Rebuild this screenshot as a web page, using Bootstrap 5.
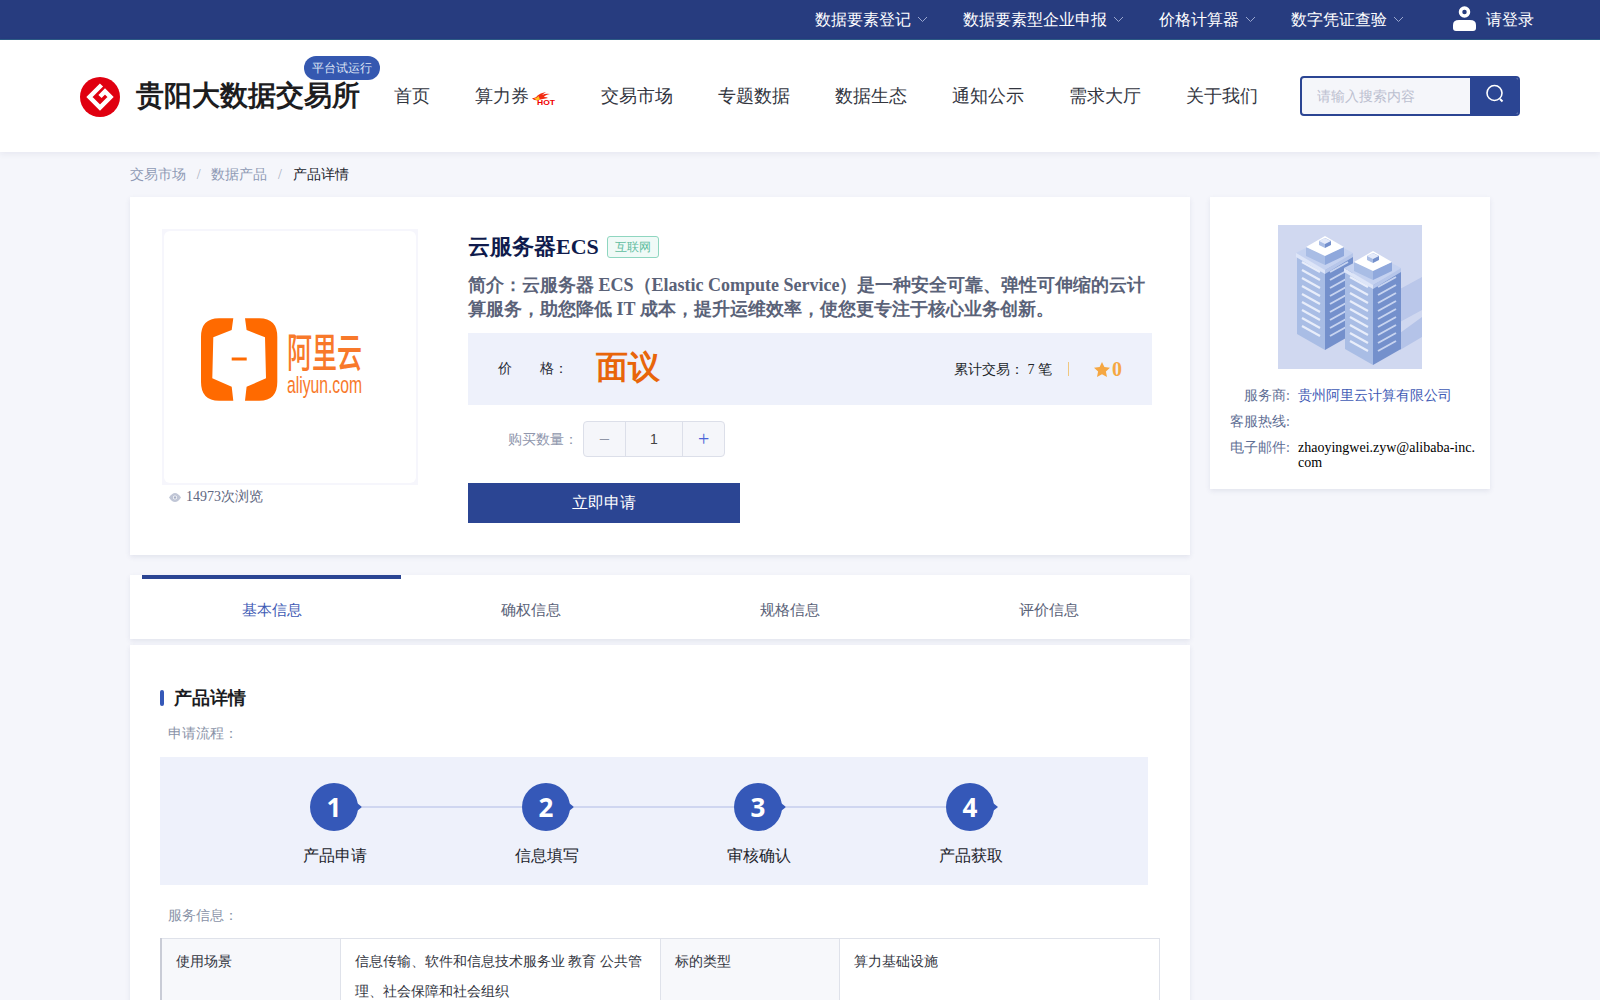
<!DOCTYPE html>
<html>
<head>
<meta charset="utf-8">
<title>云服务器ECS</title>
<link href="https://cdn.jsdelivr.net/npm/bootstrap@5.3.0/dist/css/bootstrap.min.css" rel="stylesheet">
<style>
html,body{height:1000px;overflow:hidden}
body{background:#f5f6fb;font-family:"Liberation Serif",serif;color:#212529}
.topstrip{height:40px;background:#273c7f;border-bottom:1px solid #2c5b86;color:#fff;font-size:16px;padding-right:66px;gap:35px}
.chev{width:11px;height:7px;margin-left:6px;stroke:#9aa7cf;fill:none}
.loginbox{margin-left:14px;gap:10px}
.loginbox svg{margin-top:-2px}
.topsite{height:112px;background:#fff;box-shadow:0 2px 6px rgba(60,70,120,.08);padding-left:80px;position:relative}
.sitelogo{margin-top:2px}
.brandname{font-size:28px;font-weight:600;color:#1d1d1f;margin-left:16px;line-height:40px;white-space:nowrap}
.trialtag{position:absolute;left:304px;top:16px;width:76px;height:24px;border-radius:12px;background:#3558b0;color:#dfe5f5;font-size:12px;line-height:24px;text-align:center}
.mainnav{margin-left:34px;gap:45px;font-size:18px;color:#33363f;white-space:nowrap}
.searchbox{margin-left:42px;width:220px;height:40px;border:2px solid #2b4593;border-radius:4px;overflow:hidden;background:#f5f6fa}
.searchbox input{flex:1;min-width:0;border:0;background:transparent;padding:0 15px;font-size:14px;outline:0}
.searchbox input::placeholder{color:#bcc0d0}
.searchbtn{width:48px;background:#2b4593}
.searchbtn svg{margin:-5px 0 0 2px}
.crumbs{margin:0 0 0 130px;height:45px;font-size:14px;--bs-breadcrumb-margin-bottom:0;--bs-breadcrumb-item-padding-x:10.7px;--bs-breadcrumb-divider-color:#a9aec0;align-items:center}
.crumbs .breadcrumb-item{color:#8f9ab5}
.crumbs .breadcrumb-item.active{color:#22242c}
.pagecols{margin-left:130px;width:1360px;gap:20px}
.leftcol{width:1060px}
.rightcol{width:280px}
.panel{background:#fff;box-shadow:0 2px 5px rgba(60,70,120,.1)}
.hero{height:358px;padding:32px;gap:50px}
.picbox{width:256px;height:256px;padding:2px;background:#f6f6fc}
.picinner{width:252px;height:252px;background:#fff;border-radius:6px}
.viewcount{font-size:14px;color:#5f6882;margin-top:2px;padding-left:7px;gap:5px;line-height:20px}
.herotitle{font-size:22px;font-weight:700;color:#0f1b4c;line-height:30px;margin-top:3px;gap:8px}
.herotag{width:52px;height:22px;border:1px solid #8fd6c0;border-radius:3px;background:#f0faf7;color:#5fbd9f;font-size:12px;font-weight:400;line-height:20px;text-align:center}
.herodesc{font-size:18px;font-weight:700;line-height:24px;color:#5a6278;margin:11px 0 0;width:684px}
.priceband{background:#eef1fb;width:684px;height:72px;margin-top:12px;padding:0 30px;font-size:14px}
.pricelabel{width:98px;color:#2a2d38;white-space:pre;margin-top:-2px}
.pricevalue{font-size:32px;font-weight:700;color:#e8650a;margin-top:-5px;line-height:46px}
.sepbar{width:1px;height:14px;background:#f0c77f;margin:0 25px 0 16px}
.scorenum{font-size:20px;font-weight:700;color:#f5a742;margin-left:2px}
.qtyrow{margin-top:16px;font-size:14px;color:#9097ad;padding-left:40px;gap:5px}
.stepper{width:142px;height:36px;border:1px solid #dcdfe9;border-radius:4px;background:#f5f6fa;overflow:hidden}
.stepbtn{width:41px;font-size:20px;line-height:1}
.stepminus{color:#8f95a6}
.stepplus{color:#4a63d8}
.stepval{width:59px;border:solid #dcdfe9;border-width:0 1px;color:#444;text-align:center;font-family:"Liberation Sans",sans-serif}
.applybtn{width:272px;height:40px;margin-top:26px;background:#2b4593;border:0;border-radius:0;color:#fff;font-size:16px}
.tabstrip{height:64px;margin-top:20px;padding:0 12px}
.tabcell{width:259px;border-top:4px solid transparent;font-size:15px;color:#5a6278;padding-top:20px;text-align:center}
.tabcell.on{border-top-color:#2b4593;color:#3f5bb5}
.detailbox{margin-top:6px;height:500px;padding:40px 30px}
.headbar{width:4px;height:16px;background:#3558b8;border-radius:2px;margin-right:10px}
.headtext{font-size:18px;font-weight:700;color:#1b1c22;line-height:26px}
.sublabel{font-size:14px;color:#8a93a8;padding-left:8px;line-height:20px}
.labelfirst{margin-top:13px}
.labelnext{margin-top:21px}
.flowband{width:988px;height:128px;background:#eef1fb;margin-top:13px;padding-top:26px;padding-left:150px}
.flowstep{width:212px;flex:none}
.flowtop{height:48px}
.flownum{width:48px;height:48px;border-radius:50%;background:#3558b8;color:#fff;font:700 26px/48px "Open Sans","Liberation Sans",sans-serif;text-align:center;position:relative;flex:none}
.flownum::after{content:"";position:absolute;right:-4px;top:20px;border-left:5px solid #3558b8;border-top:4px solid transparent;border-bottom:4px solid transparent}
.flowline{height:2px;background:#cfd6f0;flex:1;margin-left:4px}
.flowname{width:74px;margin-left:-12px;font-size:15.5px;line-height:24px;margin-top:13px;color:#22242c;white-space:nowrap;text-align:center}
.specgrid{width:998px;margin-top:12px;font-size:14px;color:#33363f;line-height:30px;table-layout:fixed;--bs-table-border-color:#dfe2ea}
.specgrid td{padding:8px 14px 10px;height:130px;vertical-align:top}
.specgrid .keycell{background:#f7f8fb}
.specgrid td:first-child{border-left:2px solid #c9ccd6}
.vendorcard{height:292px;padding-top:28px}
.vendorpic{width:144px;height:144px;display:block;margin:0 auto 19px}
.vendorrow{font-size:14px;gap:8px;line-height:15px;margin-bottom:11px;padding-right:14px}
.vendorkey{width:80px;flex:none;text-align:right;color:#5f6f95}
.vendorval{color:#000;word-break:break-all;min-width:0}
.vendorlink{color:#3f5bb5}
</style>
</head>
<body>
<div class="topstrip d-flex justify-content-end align-items-center">
  <div class="d-flex align-items-center">数据要素登记<svg class="chev" viewBox="0 0 11 7"><path d="M1 1l4.500 4.500L10 1"/></svg></div>
  <div class="d-flex align-items-center">数据要素型企业申报<svg class="chev" viewBox="0 0 11 7"><path d="M1 1l4.500 4.500L10 1"/></svg></div>
  <div class="d-flex align-items-center">价格计算器<svg class="chev" viewBox="0 0 11 7"><path d="M1 1l4.500 4.500L10 1"/></svg></div>
  <div class="d-flex align-items-center">数字凭证查验<svg class="chev" viewBox="0 0 11 7"><path d="M1 1l4.500 4.500L10 1"/></svg></div>
  <div class="loginbox d-flex align-items-center flex-shrink-0">
    <svg width="23" height="25" viewBox="0 0 23 25"><circle cx="11.500" cy="6" r="4" fill="none" stroke="#fff" stroke-width="3.500"/><path d="M0 19q0-5 6-5h11q6 0 6 5v3q0 3-3 3H3q-3 0-3-3z" fill="#fff"/></svg>
    <span>请登录</span>
  </div>
</div>

<div class="topsite d-flex align-items-center">
  <svg width="40" height="40" viewBox="0 0 40 40" class="flex-shrink-0 sitelogo">
    <circle cx="20" cy="20" r="20" fill="#e00010"/>
    <path d="M21.500 8L9.500 20 20 30.500 30.500 20 25 14.500 20 19.500" fill="none" stroke="#fff" stroke-width="4.500"/>
  </svg>
  <div class="brandname">贵阳大数据交易所</div>
  <div class="trialtag">平台试运行</div>
  <nav class="mainnav d-flex align-items-center">
    <span>首页</span>
    <span class="d-flex align-items-center">算力券
      <svg width="27" height="18" viewBox="0 0 27 18" class="flex-shrink-0"><path d="M3 11Q7 11 8 9 11 6 17 5 14 7 13 8 17 6 21 7 16 8 15 10 18 10 19 11L9 13Q5 14 3 11z" fill="#f22a10"/><path d="M5 11.500Q8 11 9.500 9L11 12.500 8 13.500z" fill="#ffc020"/><text x="8" y="18" font-family="Liberation Sans" font-weight="700" font-size="7" fill="#f00000" textLength="18" lengthAdjust="spacingAndGlyphs">HOT</text></svg>
    </span>
    <span>交易市场</span>
    <span>专题数据</span>
    <span>数据生态</span>
    <span>通知公示</span>
    <span>需求大厅</span>
    <span>关于我们</span>
  </nav>
  <div class="searchbox d-flex flex-shrink-0">
    <input type="text" placeholder="请输入搜索内容">
    <div class="searchbtn d-flex align-items-center justify-content-center">
      <svg width="20" height="20" viewBox="0 0 20 20" fill="none" stroke="#fff" stroke-width="1.600"><circle cx="9.500" cy="9" r="7.500"/><path d="M15 15l2.500 2.500" stroke-width="2"/></svg>
    </div>
  </div>
</div>

<ol class="breadcrumb crumbs">
  <li class="breadcrumb-item">交易市场</li>
  <li class="breadcrumb-item">数据产品</li>
  <li class="breadcrumb-item active">产品详情</li>
</ol>

<div class="pagecols d-flex align-items-start">
  <div class="leftcol">
    <section class="panel hero d-flex">
      <div class="flex-shrink-0">
        <div class="picbox"><div class="picinner">
          <svg width="252" height="252" viewBox="-1 -1 252 252">
            <path d="M68.300 86.300L66.700 98 48.300 105.300 47.300 146.300 66.700 154.700 68.300 168.700H54Q36 168.700 36 150V105Q36 86.300 54 86.300z" fill="#ff6a00"/>
            <path d="M80 86.300L81.600 98 100 105.300 101 146.300 81.600 154.700 80 168.700H94.300Q112.300 168.700 112.300 150V105Q112.300 86.300 94.300 86.300z" fill="#ff6a00"/>
            <rect x="66.700" y="125.500" width="15" height="3" fill="#ff6a00"/>
            <text transform="translate(122 135) scale(1 1.600)" font-family="Noto Sans CJK SC" font-size="25" font-weight="500" fill="#f8792a" textLength="75" lengthAdjust="spacingAndGlyphs">阿里云</text>
            <text transform="translate(122 161) scale(1 1.350)" font-family="Liberation Sans" font-size="18" fill="#f8792a" textLength="75" lengthAdjust="spacingAndGlyphs">aliyun.com</text>
          </svg>
        </div></div>
        <div class="viewcount d-flex align-items-center">
          <svg width="12" height="9" viewBox="0 0 12 9"><path d="M0 4.500Q3 0 6 0t6 4.500Q9 9 6 9T0 4.500z" fill="#c0c6d6"/><circle cx="6" cy="4.500" r="2" fill="#fff"/><circle cx="6" cy="4.500" r="1.200" fill="#a6aec4"/></svg>
          <span>14973次浏览</span>
        </div>
      </div>
      <div class="flex-grow-1">
        <div class="herotitle d-flex align-items-center"><span>云服务器ECS</span><span class="herotag">互联网</span></div>
        <p class="herodesc">简介：云服务器 ECS（Elastic Compute Service）是一种安全可靠、弹性可伸缩的云计算服务，助您降低 IT 成本，提升运维效率，使您更专注于核心业务创新。</p>
        <div class="priceband d-flex align-items-center">
          <span class="pricelabel">价&#12288;&#12288;格：</span>
          <span class="pricevalue">面议</span>
          <span class="ms-auto">累计交易： 7 笔</span>
          <span class="sepbar"></span>
          <svg width="16" height="15" viewBox="0 0 16 15"><path d="M8 0l2.400 5 5.600.700-4.100 3.800 1.100 5.500L8 12.300 3 15l1.100-5.500L0 5.700 5.600 5z" fill="#f5a742"/></svg>
          <span class="scorenum">0</span>
        </div>
        <div class="qtyrow d-flex align-items-center">
          <span>购买数量：</span>
          <div class="stepper d-flex">
            <div class="stepbtn d-flex align-items-center justify-content-center stepminus">−</div>
            <div class="stepval d-flex align-items-center justify-content-center">1</div>
            <div class="stepbtn d-flex align-items-center justify-content-center stepplus">+</div>
          </div>
        </div>
        <button type="button" class="btn applybtn">立即申请</button>
      </div>
    </section>

    <section class="panel tabstrip d-flex">
      <div class="tabcell on">基本信息</div>
      <div class="tabcell">确权信息</div>
      <div class="tabcell">规格信息</div>
      <div class="tabcell">评价信息</div>
    </section>

    <section class="panel detailbox">
      <div class="d-flex align-items-center"><span class="headbar"></span><span class="headtext">产品详情</span></div>
      <div class="sublabel labelfirst">申请流程：</div>
      <div class="flowband d-flex">
        <div class="flowstep"><div class="flowtop d-flex align-items-center"><div class="flownum">1</div><div class="flowline"></div></div><div class="flowname">产品申请</div></div>
        <div class="flowstep"><div class="flowtop d-flex align-items-center"><div class="flownum">2</div><div class="flowline"></div></div><div class="flowname">信息填写</div></div>
        <div class="flowstep"><div class="flowtop d-flex align-items-center"><div class="flownum">3</div><div class="flowline"></div></div><div class="flowname">审核确认</div></div>
        <div class="flowstep"><div class="flowtop d-flex align-items-center"><div class="flownum">4</div></div><div class="flowname">产品获取</div></div>
      </div>
      <div class="sublabel labelnext">服务信息：</div>
      <table class="table table-bordered specgrid">
        <colgroup><col style="width:179px"><col style="width:320px"><col style="width:179px"><col style="width:320px"></colgroup>
        <tr>
          <td class="keycell">使用场景</td>
          <td>信息传输、软件和信息技术服务业 教育 公共管理、社会保障和社会组织</td>
          <td class="keycell">标的类型</td>
          <td>算力基础设施</td>
        </tr>
      </table>
    </section>
  </div>

  <aside class="rightcol">
    <section class="panel vendorcard">
      <svg class="vendorpic" viewBox="0 0 144 144">
        <defs>
          <g id="towerunit">
            <path d="M19 30L47 45V125L19 109z" fill="#a9bde5"/>
            <path d="M47 45L75 30V109L47 125z" fill="#7490cc"/>
            <path d="M18 28L47 13 75 28 47 45z" fill="#c5d2f0"/>
            <path d="M18 28L47 45V49L18 32z" fill="#dde5f8"/>
            <path d="M47 45L75 28V32L47 49z" fill="#b6c6ea"/>
            <path d="M28 22V31L47 40V30z" fill="#a9bde5"/>
            <path d="M66 22V31L47 40V30z" fill="#8fa8dc"/>
            <path d="M28 22L47 11 66 22 47 31z" fill="#fff"/>
            <path d="M41 16L47 13V23L41 20z" fill="#a9bde5"/><path d="M53 16L47 13V23L53 20z" fill="#7490cc"/><path d="M41 16L47 13 53 16 47 19z" fill="#e4eafa"/>
            <g stroke="#e8edfa" stroke-width="2.200">
              <path d="M24 37L42 47M24 45L42 55M24 53L42 63M24 61L42 71M24 69L42 79M24 77L42 87M24 85L42 95M24 93L42 103M24 101L42 111"/>
            </g>
            <g stroke="#c8d4f0" stroke-width="2">
              <path d="M52 47L70 37M52 55L70 45M52 63L70 53M52 71L70 61M52 79L70 69M52 87L70 77M52 95L70 85M52 103L70 93M52 111L70 101"/>
            </g>
          </g>
        </defs>
        <rect width="144" height="144" fill="#d0d8f0"/>
        <path d="M122 64L144 52V85L122 97z" fill="#bac7ea"/>
        <path d="M122 108L144 92V112L122 125z" fill="#b4c3e8"/>
        <use href="#towerunit"/>
        <use href="#towerunit" x="48" y="15"/>
      </svg>
      <div class="vendorrow d-flex"><span class="vendorkey">服务商:</span><span class="vendorlink">贵州阿里云计算有限公司</span></div>
      <div class="vendorrow d-flex"><span class="vendorkey">客服热线:</span><span></span></div>
      <div class="vendorrow d-flex"><span class="vendorkey">电子邮件:</span><span class="vendorval">zhaoyingwei.zyw@alibaba-inc.com</span></div>
    </section>
  </aside>
</div>
</body>
</html>
